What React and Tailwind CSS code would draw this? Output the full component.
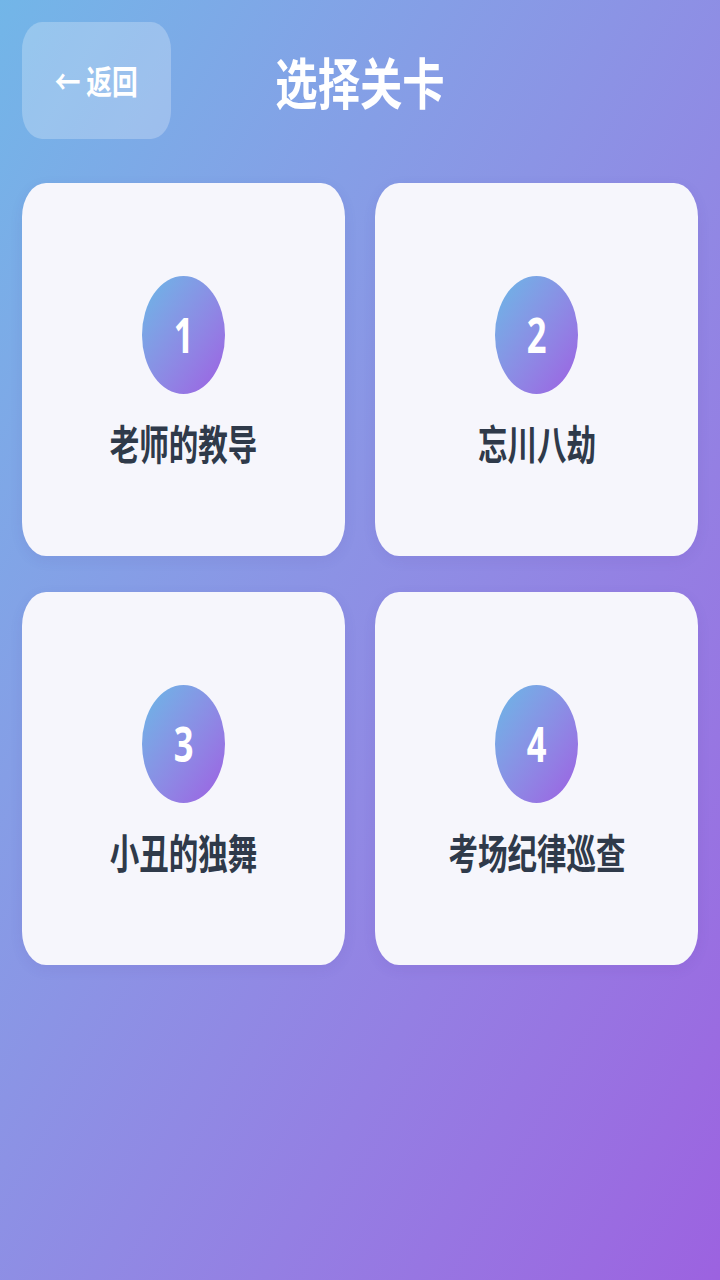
import React from "react";

const levels = [
  { n: 1, name: "老师的教导" },
  { n: 2, name: "忘川八劫" },
  { n: 3, name: "小丑的独舞" },
  { n: 4, name: "考场纪律巡查" },
];

const font = { fontFamily: '"Noto Sans CJK SC", "Noto Sans", sans-serif' };

export default function App() {
  return (
    <div
      className="w-[720px] h-[1280px] bg-gradient-to-br from-[#72b6e8] to-[#9c62e0] flex flex-col px-[22px] pt-[22px]"
      style={font}
    >
      <div className="grid grid-cols-[149px_1fr_149px] items-center h-[117px]">
        <button className="h-[117px] w-[149px] rounded-[20px/28px] bg-white/25 flex items-center justify-center text-white">
          <span className="inline-block scale-x-[0.78] text-[33px] font-bold leading-none whitespace-nowrap">← 返回</span>
        </button>
        <div className="flex justify-center">
          <span className="inline-block scale-x-[0.77] text-[55px] font-bold text-white leading-none whitespace-nowrap">选择关卡</span>
        </div>
        <div />
      </div>
      <div className="grid grid-cols-2 gap-x-[30px] gap-y-[36px] mt-[44px]">
        {levels.map((l) => (
          <div
            key={l.n}
            className="h-[373px] rounded-[24px/34px] bg-[#f6f6fc] shadow-[0_4px_14px_rgba(60,40,140,0.08)] flex flex-col items-center justify-center"
          >
            <div className="w-[83px] h-[118px] rounded-[50%] bg-gradient-to-br from-[#66b8e6] to-[#9c5ee2] flex items-center justify-center">
              <span className="inline-block scale-x-[0.72] text-white text-[48px] font-bold leading-none" style={{ fontFamily: '"Noto Sans", sans-serif' }}>{l.n}</span>
            </div>
            <div className="mt-[28px] h-[42px] flex items-center">
              <span className="inline-block scale-x-[0.72] text-[41px] font-bold text-[#2f3a4a] leading-none whitespace-nowrap">{l.name}</span>
            </div>
          </div>
        ))}
      </div>
    </div>
  );
}
